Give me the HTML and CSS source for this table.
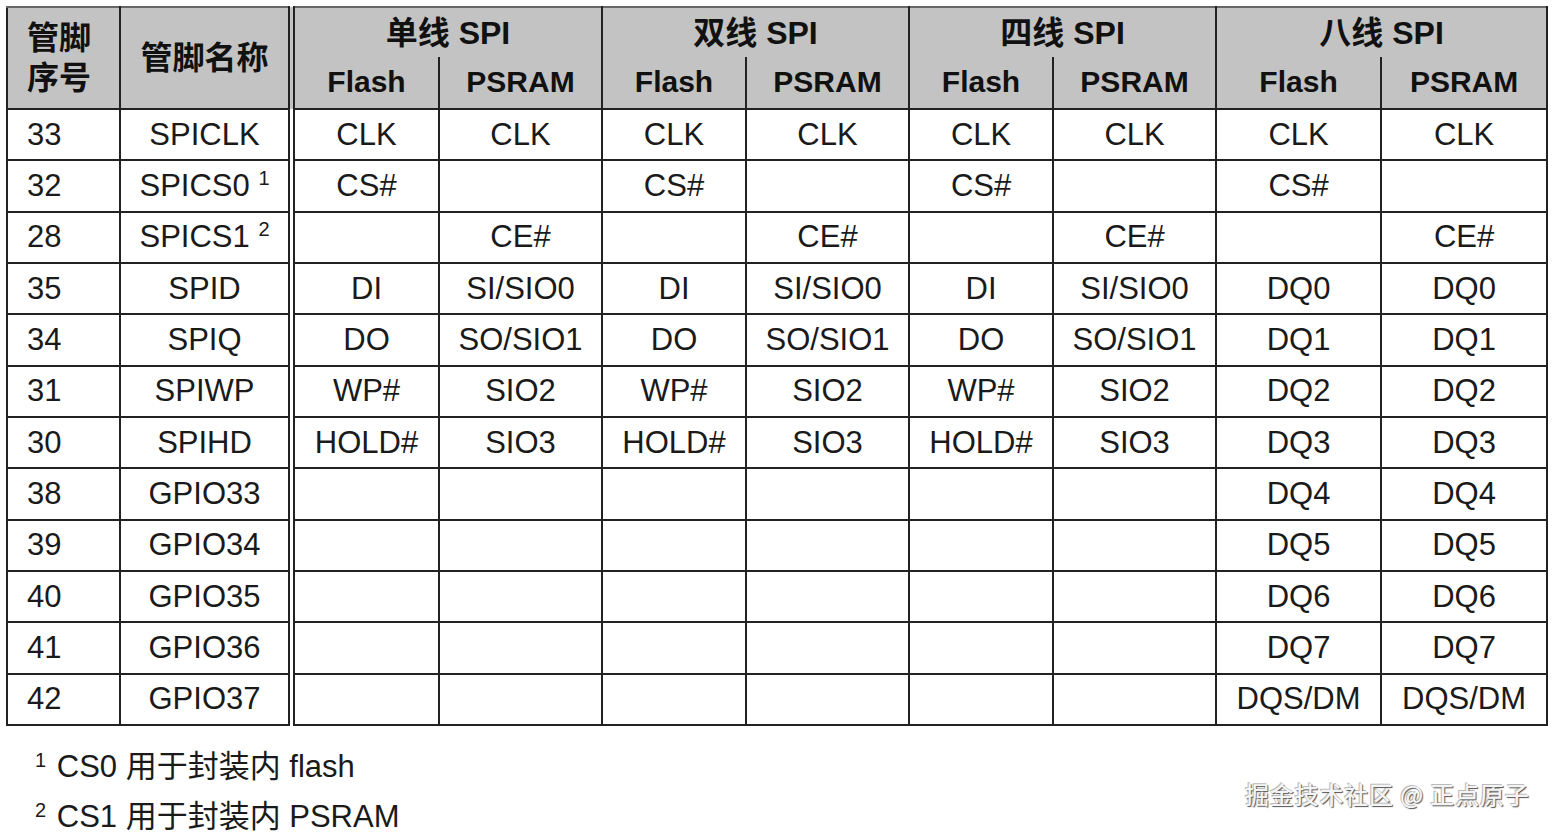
FILE: index.html
```html
<!DOCTYPE html>
<html lang="zh">
<head>
<meta charset="utf-8">
<link rel="stylesheet" href="styles.css">
<title>SPI 管脚</title>
</head>
<body>
<div class="page">
<table class="pins">
<colgroup>
<col class="c-num"><col class="c-name">
<col class="c-f"><col class="c-p">
<col class="c-f2"><col class="c-p">
<col class="c-f2"><col class="c-p">
<col class="c-f8"><col class="c-p8">
</colgroup>
<thead>
<tr class="h1">
<th rowspan="2" class="num-h">管脚<br>序号</th>
<th rowspan="2" class="name-h sep">管脚名称</th>
<th colspan="2">单线 SPI</th>
<th colspan="2">双线 SPI</th>
<th colspan="2">四线 SPI</th>
<th colspan="2">八线 SPI</th>
</tr>
<tr class="h2">
<th>Flash</th><th>PSRAM</th>
<th>Flash</th><th>PSRAM</th>
<th>Flash</th><th>PSRAM</th>
<th>Flash</th><th>PSRAM</th>
</tr>
</thead>
<tbody>
<tr><td class="num">33</td><td class="sep">SPICLK</td><td>CLK</td><td>CLK</td><td>CLK</td><td>CLK</td><td>CLK</td><td>CLK</td><td>CLK</td><td>CLK</td></tr>
<tr><td class="num">32</td><td class="sep">SPICS0 <sup>1</sup></td><td>CS#</td><td></td><td>CS#</td><td></td><td>CS#</td><td></td><td>CS#</td><td></td></tr>
<tr><td class="num">28</td><td class="sep">SPICS1 <sup>2</sup></td><td></td><td>CE#</td><td></td><td>CE#</td><td></td><td>CE#</td><td></td><td>CE#</td></tr>
<tr><td class="num">35</td><td class="sep">SPID</td><td>DI</td><td>SI/SIO0</td><td>DI</td><td>SI/SIO0</td><td>DI</td><td>SI/SIO0</td><td>DQ0</td><td>DQ0</td></tr>
<tr><td class="num">34</td><td class="sep">SPIQ</td><td>DO</td><td>SO/SIO1</td><td>DO</td><td>SO/SIO1</td><td>DO</td><td>SO/SIO1</td><td>DQ1</td><td>DQ1</td></tr>
<tr><td class="num">31</td><td class="sep">SPIWP</td><td>WP#</td><td>SIO2</td><td>WP#</td><td>SIO2</td><td>WP#</td><td>SIO2</td><td>DQ2</td><td>DQ2</td></tr>
<tr><td class="num">30</td><td class="sep">SPIHD</td><td>HOLD#</td><td>SIO3</td><td>HOLD#</td><td>SIO3</td><td>HOLD#</td><td>SIO3</td><td>DQ3</td><td>DQ3</td></tr>
<tr><td class="num">38</td><td class="sep">GPIO33</td><td></td><td></td><td></td><td></td><td></td><td></td><td>DQ4</td><td>DQ4</td></tr>
<tr><td class="num">39</td><td class="sep">GPIO34</td><td></td><td></td><td></td><td></td><td></td><td></td><td>DQ5</td><td>DQ5</td></tr>
<tr><td class="num">40</td><td class="sep">GPIO35</td><td></td><td></td><td></td><td></td><td></td><td></td><td>DQ6</td><td>DQ6</td></tr>
<tr><td class="num">41</td><td class="sep">GPIO36</td><td></td><td></td><td></td><td></td><td></td><td></td><td>DQ7</td><td>DQ7</td></tr>
<tr><td class="num">42</td><td class="sep">GPIO37</td><td></td><td></td><td></td><td></td><td></td><td></td><td>DQS/DM</td><td>DQS/DM</td></tr>
</tbody>
</table>
<div class="notes">
<p class="note"><sup>1</sup> CS0 用于封装内 flash</p>
<p class="note"><sup>2</sup> CS1 用于封装内 PSRAM</p>
</div>
<div class="watermark">掘金技术社区 @ 正点原子</div>
</div>
</body>
</html>
```
FILE: styles.css
```css
html, body {
  margin: 0;
  padding: 0;
  background: #ffffff;
}
.page {
  position: relative;
  width: 1554px;
  height: 833px;
  overflow: hidden;
  padding: 6px 0 0 6px;
  box-sizing: border-box;
  font-family: "Liberation Sans", Arial, "Noto Sans CJK SC", sans-serif;
  color: #1a1a1a;
}
.pins {
  border-collapse: collapse;
  table-layout: fixed;
  width: 1542px;
  border: 2px solid #222;
}
.c-num { width: 113px; }
.c-name { width: 171.5px; }
.c-f { width: 147.5px; }
.c-p { width: 163px; }
.c-f2 { width: 144px; }
.c-f8 { width: 165px; }
.c-p8 { width: 166px; }

.pins th, .pins td {
  border: 2px solid #222;
  padding: 0;
  text-align: center;
  vertical-align: middle;
  white-space: nowrap;
}
.pins thead th {
  background: #c3c3c3;
  font-weight: bold;
  font-size: 30px;
  font-family: "Liberation Sans", Arial, "Noto Sans CJK SC", sans-serif;
  color: #111;
}
.pins thead tr.h1 th {
  border-top: 2px solid #666;
  border-bottom: none;
  height: 49px;
  padding-bottom: 0;
  font-size: 32px;
  line-height: 40px;
}
.pins thead tr.h2 th {
  border-top: none;
  height: 49px;
  padding-bottom: 2px;
}
.pins thead th.num-h {
  text-align: left;
  padding-left: 19px;
  line-height: 48px;
  font-size: 30px;
}
.pins thead th.name-h {
  font-size: 31px;
  line-height: 40px;
}
.pins .sep {
  border-right: 7px double #222;
}
.pins tbody td {
  height: 49.33px;
  font-size: 31px;
  line-height: 36px;
  font-weight: normal;
  padding-top: 0;
}
.pins tbody td.num {
  text-align: left;
  padding-left: 19px;
}
.pins sup {
  font-size: 20px;
  vertical-align: 11px;
  line-height: 0;
}
.notes {
  padding-left: 49px;
  padding-top: 16px;
}
.note {
  margin: 0;
  font-size: 31px;
  line-height: 50px;
  color: #1a1a1a;
}
.note sup {
  font-size: 20px;
  vertical-align: 10px;
  line-height: 0;
  margin-left: -20px;
  margin-right: 2px;
}
.watermark {
  position: absolute;
  left: 1245px;
  top: 776px;
  font-family: "Noto Sans CJK SC", sans-serif;
  font-size: 24px;
  font-weight: 500;
  color: #f4f4f4;
  text-shadow: 1px 1px 1px #555, -1px -1px 0 #bbb;
  letter-spacing: 0.8px;
}
```
